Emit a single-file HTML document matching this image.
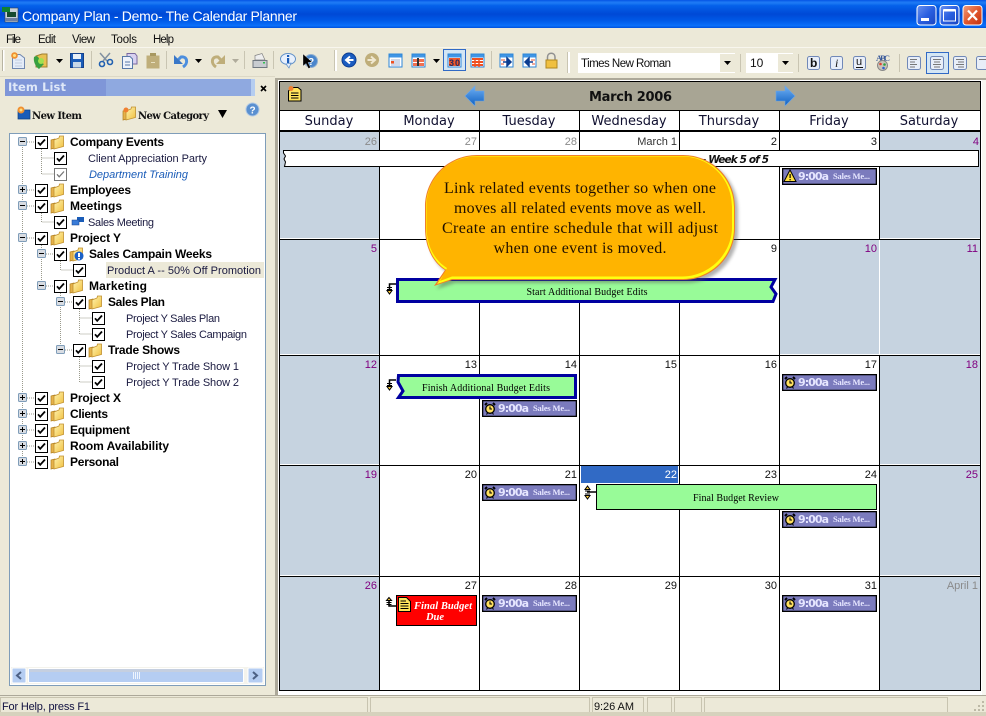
<!DOCTYPE html>
<html><head><meta charset="utf-8"><title>Company Plan - Demo- The Calendar Planner</title>
<style>
html,body{margin:0;padding:0;background:#ece9d8;width:986px;height:716px;overflow:hidden}
svg{display:block}
text{font-family:"Liberation Sans",sans-serif;white-space:pre}
.b{font-weight:bold;font-size:12px;fill:#000}
.l{font-size:11px;fill:#1a1a40}
.n{font-size:11px;text-anchor:end;fill:#111}
.g{font-size:11px;text-anchor:end;fill:#8a8a8a}
.p{font-size:11px;text-anchor:end;fill:#800080}
.d{font-family:"DejaVu Sans",sans-serif;font-size:13px;text-anchor:middle;fill:#101030}
.t{font-family:"DejaVu Sans",sans-serif;font-weight:bold;font-size:11px;fill:#e6e6ff}
.s{font-family:"Liberation Serif",serif;font-weight:bold;font-size:8.5px;fill:#e6e6ff}
.e{font-family:"Liberation Serif",serif;font-size:10px;fill:#000;text-anchor:middle}
.m{font-size:11px;fill:#111}
.bal{font-family:"Liberation Serif",serif;font-size:16px;fill:#201000;text-anchor:middle}
.nw{font-family:"DejaVu Serif","Liberation Serif",serif;font-weight:bold;font-size:10px;fill:#111}
.dot{stroke:#9a9a8c;stroke-width:1;stroke-dasharray:1 1;fill:none}
</style></head><body>
<svg xmlns="http://www.w3.org/2000/svg" width="986" height="716" viewBox="0 0 986 716" shape-rendering="geometricPrecision">
<defs>
<linearGradient id="tb" x1="0" y1="0" x2="0" y2="1">
<stop offset="0" stop-color="#0a5ce8"/><stop offset=".1" stop-color="#1f7cf5"/><stop offset=".2" stop-color="#0461ea"/><stop offset=".5" stop-color="#0049d6"/><stop offset=".72" stop-color="#0058e6"/><stop offset=".92" stop-color="#0a70fa"/><stop offset="1" stop-color="#0050dc"/>
</linearGradient>
<linearGradient id="wb" x1="0" y1="0" x2="1" y2="1"><stop offset="0" stop-color="#6c93f0"/><stop offset=".5" stop-color="#2a5fe0"/><stop offset="1" stop-color="#1a45c0"/></linearGradient>
<linearGradient id="cl" x1="0" y1="0" x2="1" y2="1"><stop offset="0" stop-color="#f0a080"/><stop offset=".5" stop-color="#e2582e"/><stop offset="1" stop-color="#c03010"/></linearGradient>
<linearGradient id="fo" x1="0" y1="0" x2="1" y2="1"><stop offset="0" stop-color="#fff4b0"/><stop offset="1" stop-color="#f0c040"/></linearGradient>
<linearGradient id="ar" x1="0" y1="0" x2="0" y2="1"><stop offset="0" stop-color="#6fb0f5"/><stop offset="1" stop-color="#1060c0"/></linearGradient>
<filter id="blur"><feGaussianBlur stdDeviation="1.6"/></filter>
<symbol id="chk" width="13" height="13" overflow="visible"><rect x=".5" y=".5" width="12" height="12" fill="#fff" stroke="#000"/><path d="M3 6.300L5.200 8.800L10 3.500" fill="none" stroke="#000" stroke-width="1.800"/></symbol>
<symbol id="chg" width="13" height="13" overflow="visible"><rect x=".5" y=".5" width="12" height="12" fill="#fff" stroke="#777"/><path d="M3 6.300L5.200 8.800L10 3.500" fill="none" stroke="#777" stroke-width="1.300"/></symbol>
<symbol id="min" width="9" height="9" overflow="visible"><rect x=".5" y=".5" width="8" height="8" rx="1" fill="#d8dce2" stroke="#7f9db9"/><path d="M2 4.500H7" stroke="#000"/></symbol>
<symbol id="pls" width="9" height="9" overflow="visible"><rect x=".5" y=".5" width="8" height="8" rx="1" fill="#d8dce2" stroke="#7f9db9"/><path d="M2 4.500H7M4.500 2V7" stroke="#000"/></symbol>
<symbol id="fld" width="15" height="15" overflow="visible"><path d="M1 5L5 4V13L1 14Z" fill="#e6b24a" stroke="#b08020" stroke-width=".7"/><path d="M4 5L9 3L9.500 1L13.500 1V11.500L4 14Z" fill="url(#fo)" stroke="#c09030" stroke-width=".8"/></symbol>
<symbol id="alm" width="12" height="14" overflow="visible"><path d="M1 3L3 1M11 3L9 1" stroke="#000" stroke-width="2"/><circle cx="6" cy="7" r="4.300" fill="#ffe060" stroke="#000" stroke-width="1.300"/><path d="M6 4.500V7H8M2.500 12.500L3.500 11M9.500 12.500L8.500 11" fill="none" stroke="#000" stroke-width="1.100"/></symbol>
<symbol id="nte" width="13" height="15" overflow="visible"><path d="M.5.5H8.500L12.500 4.500V14.500H.5Z" fill="#ffe45c" stroke="#000"/><path d="M2.500 4H8M2.500 6.500H10.500M2.500 9H10.500M2.500 11.500H10.500" stroke="#000"/></symbol>
<symbol id="cal" width="21" height="15" overflow="visible"><rect x=".5" y=".5" width="13" height="13" fill="#fff" stroke="#2e86d8"/><rect x="1" y="1" width="12" height="3" fill="#3f95e5"/></symbol>
</defs>

<!-- window chrome -->
<rect width="986" height="716" fill="#ece9d8"/>
<rect width="986" height="28" fill="url(#tb)"/>
<rect x="0" y="0" width="986" height="1" fill="#0a5ce8"/>
<g><rect x="5" y="8" width="13" height="14" fill="#c8d0d8" stroke="#304050" stroke-width=".6"/><rect x="2" y="7" width="8" height="5" fill="#108030"/><rect x="7" y="12" width="9" height="5" fill="#184a30"/><rect x="5" y="18" width="13" height="3" fill="#7080a0"/></g>
<text x="22" y="21" style="font-size:14px" fill="#fff" textLength="275">Company Plan - Demo- The Calendar Planner</text>
<g>
<rect x="917" y="5.500" width="19" height="19.500" rx="3" fill="url(#wb)" stroke="#fff"/><rect x="921" y="18" width="8" height="3" fill="#fff"/>
<rect x="940" y="5.500" width="19" height="19.500" rx="3" fill="url(#wb)" stroke="#fff"/><rect x="943.500" y="10" width="12" height="11" fill="none" stroke="#fff"/><rect x="943.500" y="9" width="12" height="2.500" fill="#fff"/>
<rect x="963" y="5.500" width="19" height="19.500" rx="3" fill="url(#cl)" stroke="#fff"/><path d="M968 10.500L977 20M977 10.500L968 20" stroke="#fff" stroke-width="2.200"/>
</g>

<!-- menu -->
<text x="6" y="43" class="m" style="font-size:11.500px" textLength="15">File</text>
<text x="38" y="43" class="m" style="font-size:11.500px" textLength="18">Edit</text>
<text x="72" y="43" class="m" style="font-size:11.500px" textLength="23">View</text>
<text x="111" y="43" class="m" style="font-size:11.500px" textLength="26">Tools</text>
<text x="153" y="43" class="m" style="font-size:11.500px" textLength="21">Help</text>
<rect y="47" width="986" height="1" fill="#f8f6ee"/>
<rect y="76" width="275" height="1" fill="#dcd8c6"/>

<!-- toolbar separators -->
<rect x="3" y="50" width="1.500" height="21" fill="#fff"/><rect x="2" y="50" width="1" height="21" fill="#b8b4a2"/>
<g fill="#c9c5b2">
<rect x="91" y="51" width="1" height="18"/><rect x="166" y="51" width="1" height="18"/><rect x="244" y="51" width="1" height="18"/><rect x="273" y="51" width="1" height="18"/>
<rect x="491" y="51" width="1" height="18"/><rect x="740" y="54" width="1" height="18"/><rect x="798" y="54" width="1" height="18"/><rect x="899" y="54" width="1" height="18"/>
<rect x="334" y="50" width="1" height="21"/><rect x="567" y="52" width="1" height="21"/>
</g>
<rect x="335" y="50" width="2" height="21" fill="#fff"/><rect x="568" y="52" width="2" height="21" fill="#fff"/>

<!-- toolbar icons -->
<path d="M12.500 54.500H20L24.500 58V68.500H12.500Z" fill="#e4ecf8" stroke="#7088b0"/><path d="M15 60H22M15 63H22M15 66H22" stroke="#c0cce0"/><circle cx="14.500" cy="55.500" r="3.300" fill="#f09030"/><circle cx="14.500" cy="55.500" r="1.500" fill="#ffe080"/>
<path d="M36 56L42 54H47V67H36Z" fill="#e8c050" stroke="#a08030"/><path d="M34 57C38 54 40 59 39 62L44 64L39 69C36 67 33 62 34 57Z" fill="#38a040"/><circle cx="41" cy="61" r="3" fill="#a0e050"/>
<path d="M56 59H63L59.500 63Z" fill="#000"/>
<path d="M70.500 53.500H83.500V67.500H70.500Z" fill="#1a5cb8" stroke="#14418c"/><rect x="73" y="54" width="8" height="5" fill="#e8f0f8"/><rect x="73" y="62" width="8" height="5.500" fill="#c8d8e8"/>
<path d="M100 53L107 61M110 53L103 61" stroke="#8090a0" stroke-width="1.500"/><circle cx="102" cy="64" r="2.500" fill="none" stroke="#2060b0" stroke-width="1.600"/><circle cx="110" cy="62" r="2.500" fill="none" stroke="#2060b0" stroke-width="1.600"/>
<path d="M127 53.500H135L137 56V64H127Z" fill="#d8d0f0" stroke="#7868a0"/><path d="M122.500 56.500H130L132.500 59V68.500H122.500Z" fill="#eef2fa" stroke="#5878a8"/><path d="M125 62H130M125 65H130" stroke="#5878a8"/>
<path d="M146.500 55.500H159.500V68.500H146.500Z" fill="#bfae7a"/><rect x="150" y="53" width="6" height="3" fill="#a89860"/><rect x="151" y="62" width="4" height="1" fill="#e8e0c0"/>
<path d="M183 67C189 63 187 56 181 57L178 60" fill="none" stroke="#4c8ede" stroke-width="3"/><path d="M174 55V64H183Z" fill="#3a78c8"/>
<path d="M195 59H202L198.500 63Z" fill="#000"/>
<path d="M216 67C210 63 212 56 218 57L221 60" fill="none" stroke="#bfae7a" stroke-width="3"/><path d="M225 55V64H216Z" fill="#bfae7a"/>
<path d="M232 59H239L235.500 63Z" fill="#b0ac9c"/>
<path d="M255 55.500L262 53.500L265 60H255Z" fill="#eee" stroke="#808080" stroke-width=".7"/><path d="M253 60.500H267V67.500H253Z" fill="#c8ccd0" stroke="#707880"/><rect x="263" y="62" width="2" height="1.500" fill="#30c050"/>
<ellipse cx="288" cy="59" rx="7.500" ry="5.500" fill="#e8f0fc" stroke="#6090c8"/><path d="M286 64L289 68L291 63Z" fill="#e8f0fc" stroke="#6090c8" stroke-width=".7"/><rect x="287" y="55" width="2.200" height="2" fill="#1a5cb8"/><rect x="287" y="58" width="2.200" height="5" fill="#1a5cb8"/>
<circle cx="311" cy="61" r="6.500" fill="#4a86cc" stroke="#90b0d0"/><text x="308" y="65" style="font-size:10px;font-weight:bold" fill="#fff">?</text>
<path d="M303 54V66L306 63.500L308.500 68.500L310.500 67.500L308 62.500L312 62Z" fill="#000" stroke="#fff" stroke-width=".3"/>
<circle cx="349" cy="60" r="7" fill="#1a5cc0" stroke="#0c3c90"/><path d="M353.500 60H347M350 56.500L346 60L350 63.500" fill="none" stroke="#fff" stroke-width="2"/>
<circle cx="372" cy="60" r="7" fill="#bfae7a"/><path d="M367.500 60H374M371 56.500L375 60L371 63.500" fill="none" stroke="#f0e8d0" stroke-width="2"/>
<g><use href="#cal" x="388.500" y="53.500"/><rect x="391" y="59" width="9" height="7" fill="#d0d8e8"/><rect x="391" y="61" width="3" height="2.500" fill="#f05020"/></g>
<g><use href="#cal" x="411.500" y="53.500"/><rect x="413" y="59" width="11" height="3" fill="#f07050"/><rect x="413" y="63" width="11" height="3" fill="#f07050"/><rect x="417" y="58" width="2" height="8" fill="#333"/></g>
<path d="M433 59H440L436.500 63Z" fill="#000"/>
<rect x="443.500" y="49.500" width="22" height="21" fill="#d4e6f4" stroke="#316ac5"/>
<g><use href="#cal" x="447.500" y="53.500"/><rect x="449" y="58" width="11" height="8" fill="#f0582a"/><text x="449" y="66" style="font-size:9px;font-weight:bold" fill="#2a2a60" textLength="11">30</text></g>
<g><use href="#cal" x="470.500" y="53.500"/><path d="M472 59H483M472 62H483M472 65H483" stroke="#f05020" stroke-width="2"/><path d="M475 58V67M479 58V67" stroke="#f05020" stroke-width="1.500"/></g>
<g><use href="#cal" x="499.500" y="53.500"/><path d="M501 60H505M501 64H504" stroke="#e05030"/><path d="M503 62H509M507 58L511 62L507 66Z" fill="#0a3c90" stroke="#0a3c90" stroke-width="1.500"/></g>
<g><use href="#cal" x="522.500" y="53.500"/><path d="M531 60H535M532 64H535" stroke="#e05030"/><path d="M533 62H527M529 58L525 62L529 66Z" fill="#0a3c90" stroke="#0a3c90" stroke-width="1.500"/></g>
<path d="M547.500 60V57C547.500 52 555 52 555 57V60" fill="none" stroke="#909090" stroke-width="1.500"/><rect x="546" y="60" width="11" height="8" fill="#f0c040" stroke="#b08820"/>

<rect x="578" y="53" width="157" height="20" fill="#fff"/><rect x="720" y="54" width="15" height="18" fill="#ece9d8"/><path d="M724 61H731L727.500 65Z" fill="#000"/>
<text x="581" y="67" class="m" style="font-size:11.500px" textLength="90">Times New Roman</text>
<rect x="746" y="53" width="47" height="20" fill="#fff"/><rect x="778" y="54" width="15" height="18" fill="#ece9d8"/><path d="M782 61H789L785.500 65Z" fill="#000"/>
<text x="750" y="67" class="m" style="font-size:12px">10</text>
<g fill="#e8eef8" stroke="#7088b8"><rect x="807.500" y="56.500" width="12" height="13" rx="2"/><rect x="830.500" y="56.500" width="12" height="13" rx="2"/><rect x="853.500" y="56.500" width="12" height="13" rx="2"/></g>
<text x="810" y="67" style="font-size:12px;font-weight:bold" fill="#111">b</text>
<text x="835" y="67" style="font-family:'Liberation Serif';font-size:12px;font-style:italic" fill="#111">i</text>
<text x="856" y="65" style="font-size:11px" fill="#111">u</text><rect x="856" y="67" width="7" height="1" fill="#111"/>
<text x="876" y="61" style="font-family:'Liberation Serif';font-size:8.500px;font-weight:bold" fill="#3a5a9a" textLength="14">ABC</text>
<circle cx="882.500" cy="65.500" r="5" fill="#c8c4b8" stroke="#888"/><circle cx="880.500" cy="64" r="1.300" fill="#e04030"/><circle cx="884.500" cy="64.500" r="1.300" fill="#30a040"/><circle cx="883.500" cy="68" r="1.300" fill="#3060d0"/>
<rect x="926.500" y="52.500" width="22" height="21" fill="#d4e6f4" stroke="#316ac5"/>
<g fill="#e8eef8" stroke="#7088b8"><rect x="907.500" y="56.500" width="13" height="13" rx="2"/><rect x="930.500" y="56.500" width="13" height="13" rx="2"/><rect x="953.500" y="56.500" width="13" height="13" rx="2"/><rect x="976.500" y="56.500" width="12" height="13" rx="2"/></g>
<path d="M910 59.500H917M910 62H915M910 64.500H917M910 67H915" stroke="#777"/>
<path d="M933 59.500H941M934 62H940M933 64.500H941M934 67H940" stroke="#777"/>
<path d="M956 59.500H964M958 62H964M956 64.500H964M958 67H964" stroke="#777"/>
<path d="M979 59.500H986" stroke="#777"/>

<!-- Item list panel -->
<rect x="5" y="79" width="250" height="17" fill="#8fa9e0"/><rect x="5" y="79" width="101" height="17" fill="#7f96d8"/><rect x="251" y="79" width="4" height="17" fill="#b5cdf0"/>
<text x="8" y="91" style="font-family:'DejaVu Sans';font-size:11.500px;font-weight:bold" fill="#dfe8f8" textLength="58">Item List</text>
<path d="M261 86L266 91M266 86L261 91" stroke="#000" stroke-width="1.600"/>
<path d="M18 110H30V119H18Z" fill="#1a5cb8" stroke="#104080" stroke-width=".7"/><circle cx="21" cy="110" r="3.500" fill="#f09030"/><circle cx="21" cy="110" r="1.500" fill="#ffe080"/>
<text x="32" y="119" class="nw" textLength="50">New Item</text>
<use href="#fld" x="122" y="106"/><circle cx="126" cy="110" r="2.500" fill="#f08030"/>
<text x="138" y="119" class="nw" textLength="71">New Category</text>
<path d="M218 110H227L222.500 118Z" fill="#000"/>
<circle cx="252.500" cy="109.500" r="6.500" fill="#5a90d0" stroke="#b0c8e4"/><text x="249.500" y="113.500" style="font-size:10px;font-weight:bold" fill="#fff">?</text>

<rect x="9.500" y="133.500" width="256" height="552" fill="#fff" stroke="#7f9db9"/>
<rect x="106" y="262" width="158" height="16" fill="#ece9d8"/>

<!-- tree connectors -->
<path class="dot" d="M22.500 147V458M27 142H35M27 190H35M27 206H35M27 238H35M27 398H35M27 414H35M27 430H35M27 446H35M27 462H35"/>
<path class="dot" d="M41.500 147V174H54M41.500 158H54M41.500 211V222H54M41.500 243V282M46 254H54M46 286H54M41.500 259V270M60.500 259V270H73M60.500 291V346M65 302H73M65 350H73M79.500 307V334H92M79.500 318H92M79.500 355V382H92M79.500 366H92"/>

<!-- tree boxes -->
<use href="#min" x="18" y="137"/><use href="#pls" x="18" y="185"/><use href="#min" x="18" y="201"/><use href="#min" x="18" y="233"/>
<use href="#pls" x="18" y="393"/><use href="#pls" x="18" y="409"/><use href="#pls" x="18" y="425"/><use href="#pls" x="18" y="441"/><use href="#pls" x="18" y="457"/>
<use href="#min" x="37" y="249"/><use href="#min" x="37" y="281"/><use href="#min" x="56" y="297"/><use href="#min" x="56" y="345"/>

<!-- checks -->
<use href="#chk" x="35" y="136"/><use href="#chk" x="54" y="152"/><use href="#chg" x="54" y="168"/><use href="#chk" x="35" y="184"/><use href="#chk" x="35" y="200"/><use href="#chk" x="54" y="216"/><use href="#chk" x="35" y="232"/><use href="#chk" x="54" y="248"/><use href="#chk" x="73" y="264"/><use href="#chk" x="54" y="280"/><use href="#chk" x="73" y="296"/><use href="#chk" x="92" y="312"/><use href="#chk" x="92" y="328"/><use href="#chk" x="73" y="344"/><use href="#chk" x="92" y="360"/><use href="#chk" x="92" y="376"/><use href="#chk" x="35" y="392"/><use href="#chk" x="35" y="408"/><use href="#chk" x="35" y="424"/><use href="#chk" x="35" y="440"/><use href="#chk" x="35" y="456"/>

<!-- folders -->
<use href="#fld" x="50" y="135"/><use href="#fld" x="50" y="183"/><use href="#fld" x="50" y="199"/><use href="#fld" x="50" y="231"/><use href="#fld" x="69" y="247"/><use href="#fld" x="69" y="279"/><use href="#fld" x="88" y="295"/><use href="#fld" x="88" y="343"/><use href="#fld" x="50" y="391"/><use href="#fld" x="50" y="407"/><use href="#fld" x="50" y="423"/><use href="#fld" x="50" y="439"/><use href="#fld" x="50" y="455"/>
<circle cx="79" cy="256" r="4.500" fill="#1a60c8"/><rect x="78" y="253" width="2" height="4" fill="#fff"/><rect x="78" y="258" width="2" height="1.500" fill="#fff"/>
<rect x="77" y="217" width="7" height="5" fill="#1a5cb8"/><rect x="72" y="220" width="7" height="5" fill="#3a7cd8" stroke="#14418c" stroke-width=".5"/>

<!-- tree text -->
<text x="70" y="146" class="b" textLength="94">Company Events</text>
<text x="88" y="162" class="l" textLength="119">Client Appreciation Party</text>
<text x="89" y="178" class="l" style="font-style:italic;fill:#1a5cb8" textLength="99">Department Training</text>
<text x="70" y="194" class="b" textLength="61">Employees</text>
<text x="70" y="210" class="b" textLength="52">Meetings</text>
<text x="88" y="226" class="l" textLength="66">Sales Meeting</text>
<text x="70" y="242" class="b" textLength="51">Project Y</text>
<text x="89" y="258" class="b" textLength="123">Sales Campain Weeks</text>
<text x="107" y="274" class="l" textLength="154">Product A -- 50% Off Promotion</text>
<text x="89" y="290" class="b" textLength="58">Marketing</text>
<text x="108" y="306" class="b" textLength="57">Sales Plan</text>
<text x="126" y="322" class="l" textLength="94">Project Y Sales Plan</text>
<text x="126" y="338" class="l" textLength="121">Project Y Sales Campaign</text>
<text x="108" y="354" class="b" textLength="72">Trade Shows</text>
<text x="126" y="370" class="l" textLength="113">Project Y Trade Show 1</text>
<text x="126" y="386" class="l" textLength="113">Project Y Trade Show 2</text>
<text x="70" y="402" class="b" textLength="51">Project X</text>
<text x="70" y="418" class="b" textLength="38">Clients</text>
<text x="70" y="434" class="b" textLength="60">Equipment</text>
<text x="70" y="450" class="b" textLength="99">Room Availability</text>
<text x="70" y="466" class="b" textLength="49">Personal</text>

<!-- scrollbar -->
<rect x="11" y="667" width="253" height="17" fill="#f4f3ec"/>
<rect x="12" y="668" width="14" height="15" rx="1" fill="#b5cdf2" stroke="#fff"/><path d="M21 672L17 675.500L21 679" fill="none" stroke="#4d6185" stroke-width="2"/>
<rect x="248" y="668" width="15" height="15" rx="1" fill="#b5cdf2" stroke="#fff"/><path d="M253 672L257 675.500L253 679" fill="none" stroke="#4d6185" stroke-width="2"/>
<rect x="28.500" y="668.500" width="215" height="14" rx="1" fill="#b5cdf2" stroke="#fff"/><rect x="30" y="669" width="212" height="3" fill="#c5cfe0"/>
<path d="M133.500 672V679M135.500 672V679M137.500 672V679M139.500 672V679" stroke="#eef4fd"/>

<!-- calendar -->
<rect x="275" y="78" width="711" height="617" fill="#fff"/>
<rect x="275" y="78" width="3" height="617" fill="#aca899"/><rect x="275" y="78" width="711" height="2" fill="#aca899"/>
<rect x="982" y="80" width="4" height="615" fill="#f7f6f0"/>
<rect x="279.500" y="81.500" width="701" height="29" fill="#a8a594"/>

<!-- weekend cells -->
<g fill="#c6d3e0">
<rect x="280" y="132" width="99" height="106"/><rect x="280" y="240" width="99" height="114"/><rect x="280" y="356" width="99" height="108"/><rect x="280" y="466" width="99" height="109"/><rect x="280" y="577" width="99" height="113"/>
<rect x="880" y="132" width="100" height="106"/><rect x="780" y="240" width="99" height="114"/><rect x="880" y="240" width="100" height="114"/><rect x="880" y="356" width="100" height="108"/><rect x="880" y="466" width="100" height="109"/><rect x="880" y="577" width="100" height="113"/>
</g>
<rect x="581" y="466" width="97" height="17" fill="#316ac5"/>

<!-- grid -->
<g fill="#000">
<rect x="279" y="81" width="702" height="1"/><rect x="279" y="110" width="702" height="1"/><rect x="279" y="130" width="702" height="2"/>
<rect x="279" y="239" width="702" height="1"/><rect x="279" y="355" width="702" height="1"/><rect x="279" y="465" width="702" height="1"/><rect x="279" y="576" width="702" height="1"/><rect x="279" y="690" width="702" height="1"/>
<rect x="279" y="81" width="1" height="610"/><rect x="980" y="81" width="1" height="610"/>
<rect x="379" y="111" width="1" height="580"/><rect x="479" y="111" width="1" height="580"/><rect x="579" y="111" width="1" height="580"/><rect x="679" y="111" width="1" height="580"/><rect x="779" y="111" width="1" height="580"/><rect x="879" y="111" width="1" height="129"/><rect x="879" y="356" width="1" height="335"/>
</g>
<rect x="879" y="240" width="1" height="115" fill="#fff"/>

<!-- calendar header -->
<path d="M288.500 91L292 87.500H298L301 90V101H288.500Z" fill="#ffe45c" stroke="#000"/><path d="M291 93H298.500M291 95.500H298.500M291 98H298.500" stroke="#000"/><circle cx="291" cy="88.500" r="2.500" fill="#f08030"/>
<path d="M465 96L475 86V91H484V101H475V106Z" fill="url(#ar)" stroke="#6aa6e8" stroke-width=".6"/>
<path d="M795 96L785 86V91H776V101H785V106Z" fill="url(#ar)" stroke="#6aa6e8" stroke-width=".6"/>
<text x="589" y="101" style="font-family:'DejaVu Sans';font-weight:bold;font-size:13px" fill="#111" textLength="83">March 2006</text>

<text x="329" y="125" class="d">Sunday</text><text x="429" y="125" class="d">Monday</text><text x="529" y="125" class="d">Tuesday</text><text x="629" y="125" class="d">Wednesday</text><text x="729" y="125" class="d">Thursday</text><text x="829" y="125" class="d">Friday</text><text x="929" y="125" class="d">Saturday</text>

<!-- date numbers -->
<text x="377" y="145" class="g">26</text><text x="477" y="145" class="g">27</text><text x="577" y="145" class="g">28</text><text x="677" y="145" class="g" style="fill:#333">March 1</text><text x="777" y="145" class="n">2</text><text x="877" y="145" class="n">3</text><text x="979" y="145" class="p">4</text>
<text x="377" y="252" class="p">5</text><text x="777" y="252" class="n">9</text><text x="877" y="252" class="p">10</text><text x="978" y="252" class="p">11</text>
<text x="377" y="368" class="p">12</text><text x="477" y="368" class="n">13</text><text x="577" y="368" class="n">14</text><text x="677" y="368" class="n">15</text><text x="777" y="368" class="n">16</text><text x="877" y="368" class="n">17</text><text x="978" y="368" class="p">18</text>
<text x="377" y="478" class="p">19</text><text x="477" y="478" class="n">20</text><text x="577" y="478" class="n">21</text><text x="677" y="478" class="n" style="fill:#fff">22</text><text x="777" y="478" class="n">23</text><text x="877" y="478" class="n">24</text><text x="978" y="478" class="p">25</text>
<text x="377" y="589" class="p">26</text><text x="477" y="589" class="n">27</text><text x="577" y="589" class="n">28</text><text x="677" y="589" class="n">29</text><text x="777" y="589" class="n">30</text><text x="877" y="589" class="n">31</text><text x="978" y="589" class="g">April 1</text>

<!-- week banner -->
<path d="M283.500 150.500H978.500V166.500H284.500L285.500 162L284 159L285.500 156L283.500 153Z" fill="#fff" stroke="#000"/>
<text x="702" y="163" style="font-family:'DejaVu Sans';font-weight:bold;font-style:italic;font-size:10.500px" fill="#111" textLength="67">- Week 5 of 5</text>

<!-- multi-day bars -->
<path d="M397.500 279.500H775L771 287L776 294L773 301.500H397.500Z" fill="#98fb98" stroke="#0000a0" stroke-width="3"/>
<text x="587" y="295" class="e" textLength="121">Start Additional Budget Edits</text>
<path d="M398.500 375.500H575.500V397.500H398.500L403 391L398 382Z" fill="#98fb98" stroke="#0000a0" stroke-width="3"/>
<text x="486" y="391" class="e" textLength="128">Finish Additional Budget Edits</text>
<rect x="596.500" y="484.500" width="280" height="25" fill="#98fb98" stroke="#000"/>
<text x="736" y="501" class="e" textLength="86">Final Budget Review</text>
<rect x="396.500" y="595.500" width="80" height="30" fill="#f00" stroke="#000"/>
<text x="443" y="609" style="font-family:'Liberation Serif';font-weight:bold;font-style:italic;font-size:10.500px;text-anchor:middle" fill="#fff" textLength="58">Final Budget</text>
<text x="435" y="620" style="font-family:'Liberation Serif';font-weight:bold;font-style:italic;font-size:10.500px;text-anchor:middle" fill="#fff">Due</text>
<use href="#nte" x="398" y="597"/>

<!-- link connectors -->
<g fill="none" stroke="#000">
<path d="M396 284H389.500V291" stroke-width="1.500"/><path d="M387 287.500H392"/><path d="M387 289.500H392"/><path d="M387 290.500H392L389.500 294Z" fill="#ffd040"/>
<path d="M396 380H389.500V387" stroke-width="1.500"/><path d="M387 383.500H392"/><path d="M387 385.500H392"/><path d="M387 386.500H392L389.500 390Z" fill="#ffd040"/>
<path d="M596 492H587" stroke-width="1.500"/><path d="M587.500 486L585 489.500H590Z" fill="#ffd040"/><path d="M585 491H590M585 494H590"/><path d="M585 495.500H590L587.500 499Z" fill="#ffd040"/>
<path d="M396 606H389V600" stroke-width="1.500"/><path d="M389 597.500L386.500 600.500H391.500Z" fill="#ffd040"/><path d="M386.500 602.500H391.500M386.500 604.500H391.500"/>
</g>

<!-- events -->
<g stroke="#000" stroke-width="1.300" fill="#7b7bbd">
<rect x="782.650" y="168.650" width="93.700" height="15.700"/><rect x="782.650" y="374.650" width="93.700" height="15.700"/><rect x="482.650" y="400.650" width="93.700" height="15.700"/><rect x="482.650" y="484.650" width="93.700" height="15.700"/><rect x="782.650" y="511.650" width="93.700" height="15.700"/><rect x="482.650" y="595.650" width="93.700" height="15.700"/><rect x="782.650" y="595.650" width="93.700" height="15.700"/>
</g>
<path d="M790 170L796 181.500H784Z" fill="#ffe040" stroke="#000"/><rect x="789.500" y="174" width="1.200" height="4" fill="#000"/><rect x="789.500" y="179" width="1.200" height="1.300" fill="#000"/>
<use href="#alm" x="784" y="376"/><use href="#alm" x="484" y="402"/><use href="#alm" x="484" y="486"/><use href="#alm" x="784" y="513"/><use href="#alm" x="484" y="597"/><use href="#alm" x="784" y="597"/>
<text x="798" y="180" class="t" textLength="31">9:00a</text><text x="833" y="179" class="s" textLength="37">Sales Me...</text>
<text x="798" y="386" class="t" textLength="31">9:00a</text><text x="833" y="385" class="s" textLength="37">Sales Me...</text>
<text x="498" y="412" class="t" textLength="31">9:00a</text><text x="533" y="411" class="s" textLength="37">Sales Me...</text>
<text x="498" y="496" class="t" textLength="31">9:00a</text><text x="533" y="495" class="s" textLength="37">Sales Me...</text>
<text x="798" y="523" class="t" textLength="31">9:00a</text><text x="833" y="522" class="s" textLength="37">Sales Me...</text>
<text x="498" y="607" class="t" textLength="31">9:00a</text><text x="533" y="606" class="s" textLength="37">Sales Me...</text>
<text x="798" y="607" class="t" textLength="31">9:00a</text><text x="833" y="606" class="s" textLength="37">Sales Me...</text>

<!-- balloon -->
<path transform="translate(3,3)" d="M477 155H683C712 155 735 178 735 207V228C735 257 712 280 683 280H452L434 286L445 270C432 262 425 246 425 228V207C425 178 448 155 477 155Z" fill="#555" opacity=".45" filter="url(#blur)"/>
<path d="M477 155H683C712 155 735 178 735 207V228C735 257 712 280 683 280H452L434 286L445 270C432 262 425 246 425 228V207C425 178 448 155 477 155Z" fill="#f0802a"/>
<path d="M477 156H683C711 156 734 179 734 207V228C734 256 711 279 683 279H452L437 284L446.500 270C433 262 426 246 426 228V207C426 179 449 156 477 156Z" fill="#ffff10"/>
<path d="M477 156.500H682C709 156.500 732 178 732 207V227C732 254 709 276.500 682 276.500H452L440 281L447 268C434 260 426.500 245 426.500 227V207C426.500 178 449 156.500 477 156.500Z" fill="#ffb400"/>
<text x="580" y="193" class="bal" textLength="272">Link related events together so when one</text>
<text x="580" y="213" class="bal" textLength="252">moves all related events move as well.</text>
<text x="580" y="233" class="bal" textLength="276">Create an entire schedule that will adjust</text>
<text x="580" y="253" class="bal" textLength="173">when one event is moved.</text>

<!-- status bar -->
<rect y="695" width="986" height="1" fill="#aca899"/>
<g fill="#ece9d8" stroke="#c8c4b0">
<rect x=".5" y="697.500" width="367" height="17"/><rect x="370.500" y="697.500" width="219" height="17"/><rect x="592.500" y="697.500" width="51" height="17"/><rect x="647.500" y="697.500" width="24" height="17"/><rect x="674.500" y="697.500" width="27" height="17"/><rect x="704.500" y="697.500" width="243" height="17"/>
</g>
<rect y="712" width="986" height="4" fill="#d6d2bd"/>
<text x="2" y="710" style="font-size:11px" fill="#111140" textLength="88">For Help, press F1</text>
<text x="594" y="710" style="font-size:11px" fill="#111" textLength="40">9:26 AM</text>
<g fill="#bdb9a6"><rect x="982" y="701" width="2" height="2"/><rect x="978" y="705" width="2" height="2"/><rect x="982" y="705" width="2" height="2"/><rect x="974" y="709" width="2" height="2"/><rect x="978" y="709" width="2" height="2"/><rect x="982" y="709" width="2" height="2"/></g>
</svg>
</body></html>
